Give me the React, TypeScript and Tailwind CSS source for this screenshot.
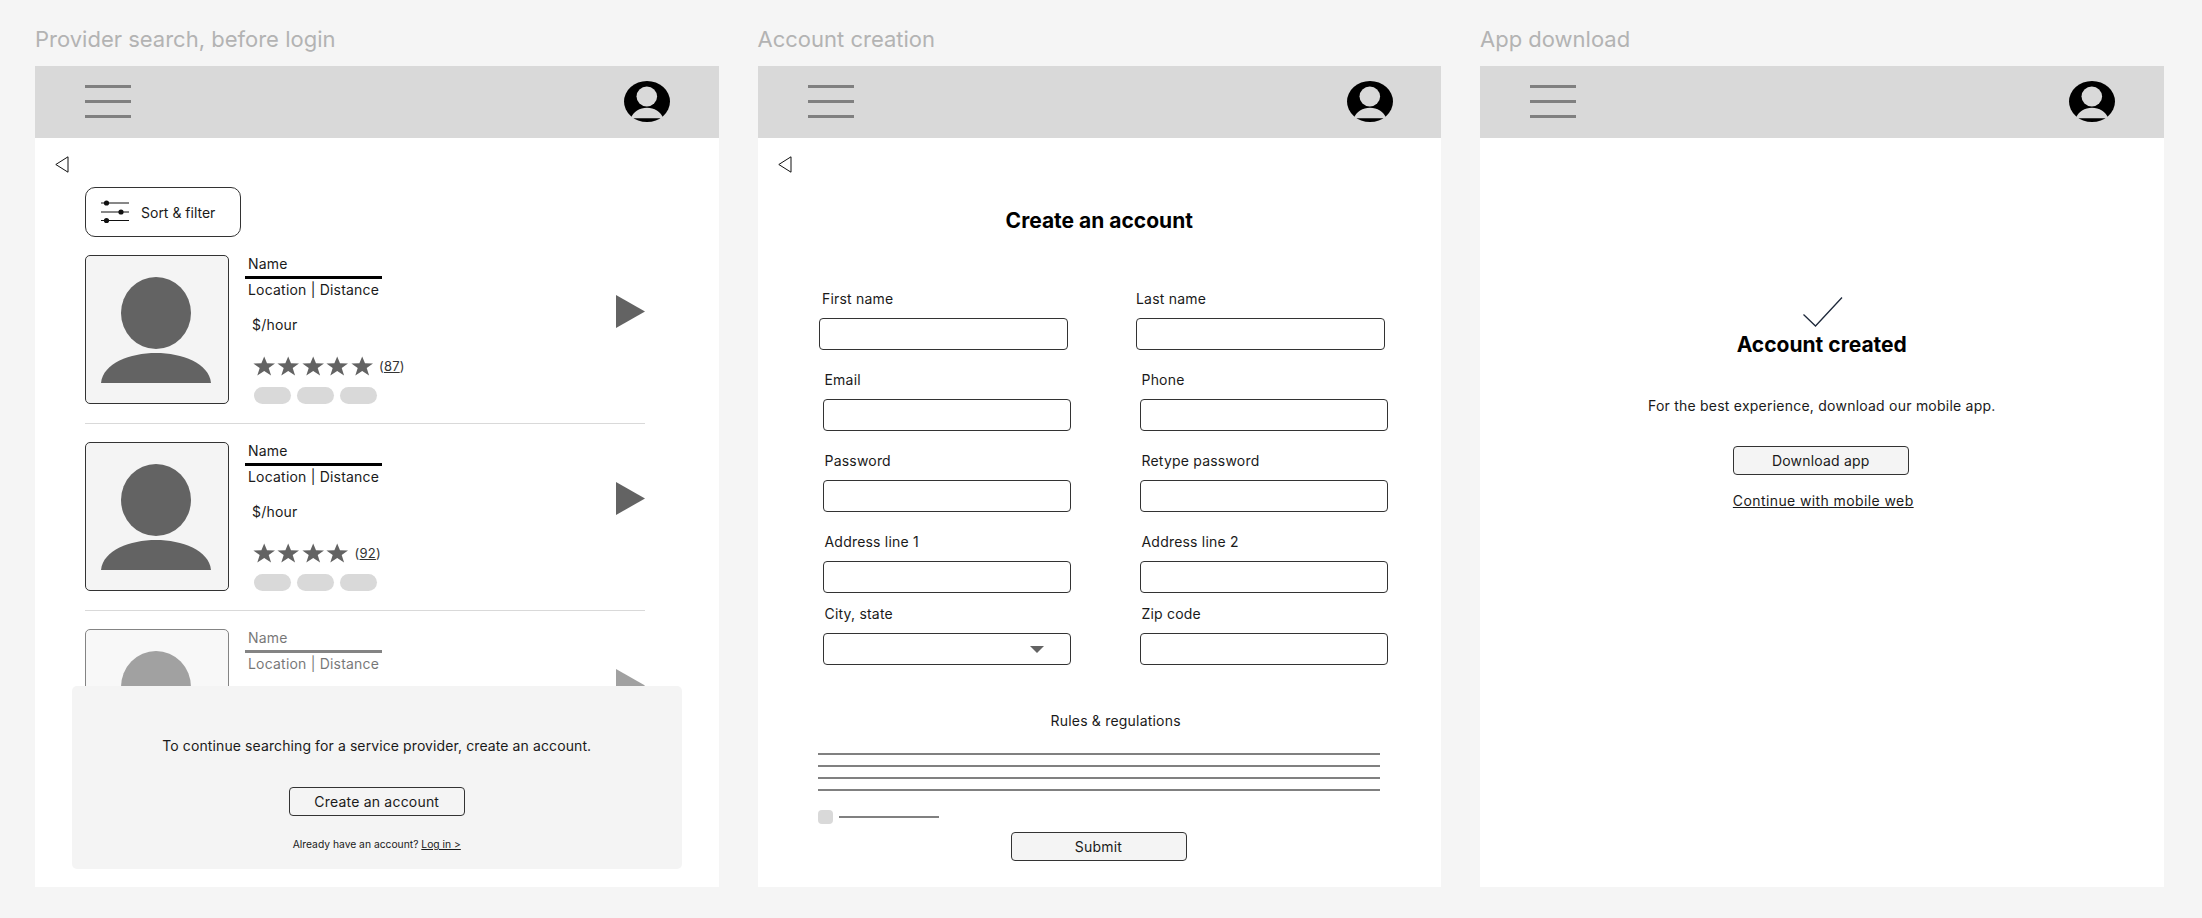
import React from "react";

const Avatar = () => (
  <svg width="46" height="41" viewBox="0 0 46 41" aria-hidden="true">
    <ellipse cx="23" cy="20.5" rx="23" ry="20.5" fill="#000" />
    <ellipse cx="22.8" cy="15.5" rx="10.3" ry="10" fill="#d9d9d9" />
    <path d="M7 37.2C9 30.5 16 26.8 23 26.8C30 26.8 37 30.5 39 37.2Z" fill="#d9d9d9" />
  </svg>
);

const Back = () => (
  <svg width="14" height="17" viewBox="0 0 14 17" className="ml-[20px] mt-[18.5px] block" aria-hidden="true">
    <path d="M13 .8V16.2L.8 8.5Z" fill="none" stroke="#111" strokeWidth="1" />
  </svg>
);

const Header = () => (
  <header className="flex h-[71.5px] items-center justify-between bg-[#d9d9d9] pl-[50px] pr-[48.5px]">
    <div className="flex flex-col gap-[12px]">
      <div className="h-[3px] w-[46px] bg-[#808080]" />
      <div className="h-[3px] w-[46px] bg-[#808080]" />
      <div className="h-[3px] w-[46px] bg-[#808080]" />
    </div>
    <Avatar />
  </header>
);

const Star = () => (
  <svg width="24.4" height="20" viewBox="0 0 24 20" aria-hidden="true">
    <polygon points="12,0.5 14.8,7.3 22.8,7.6 16.5,12.1 18.9,19.4 12,15 5.1,19.4 7.5,12.1 1.2,7.6 9.2,7.3" fill="#636363" />
  </svg>
);

const Card = ({ stars = 0, count = "", faded, divider }: { stars?: number; count?: string; faded?: boolean; divider?: boolean }) => (
  <div className={faded ? "opacity-60" : ""}>
    <div className="flex h-[149px]">
      <div className="h-[149px] w-[144px] shrink-0 rounded-[5px] border border-[#333] bg-[#f4f4f4]">
        <svg viewBox="0 0 142 147" className="block h-full w-full" aria-hidden="true">
          <ellipse cx="70" cy="57" rx="35" ry="36" fill="#636363" />
          <path d="M15 127C17 107 44 97 70 97C96 97 123 107 125 127Z" fill="#636363" />
        </svg>
      </div>
      <div className="ml-[16px] text-[14px] leading-[18px] tracking-[0.2px] text-[#1a1a1a]">
        <div className="ml-[3px]">Name</div>
        <div className={`mt-[3px] h-[3px] w-[137px] ${faded ? "bg-[#333]" : "bg-black"}`} />
        <div className="ml-[3px] mt-[2px]">Location | Distance</div>
        {!faded && (
          <>
            <div className="ml-[7px] mt-[17px]">$/hour</div>
            <div className="ml-[7px] mt-[22px] flex h-[20px] items-center">
              {Array.from({ length: stars }).map((_, i) => (
                <Star key={i} />
              ))}
              <span className="ml-[5px] text-[13px] text-[#333]">
                (<span className="underline">{count}</span>)
              </span>
            </div>
            <div className="ml-[9px] mt-[11px] flex gap-[6px]">
              <div className="h-[17px] w-[37px] rounded-full bg-[#d9d9d9]" />
              <div className="h-[17px] w-[37px] rounded-full bg-[#d9d9d9]" />
              <div className="h-[17px] w-[37px] rounded-full bg-[#d9d9d9]" />
            </div>
          </>
        )}
      </div>
      <svg width="29" height="33" viewBox="0 0 29 33" className="ml-auto mt-[40px] block" aria-hidden="true">
        <path d="M0 0L29 16.5L0 33Z" fill="#636363" />
      </svg>
    </div>
    {divider && <div className="mb-[18px] mt-[19px] h-px bg-[#d9d9d9]" />}
  </div>
);

const Button = ({ children }: { children: React.ReactNode }) => (
  <button className="h-[29px] w-[176px] rounded-[4px] border border-[#333] bg-[#f4f4f4] text-[14px] tracking-[0.2px] text-[#1a1a1a]">{children}</button>
);

const Field = ({ label, labelClass = "ml-[2px]", select }: { label: string; labelClass?: string; select?: boolean }) => (
  <label className="block w-[248.5px]">
    <span className={`block text-[14px] leading-[18px] tracking-[0.2px] text-[#1a1a1a] ${labelClass}`}>{label}</span>
    {select ? (
      <div className="mt-[10px] flex h-[32px] items-center justify-end rounded-[4px] border border-[#333] bg-white pr-[26px]">
        <svg width="14" height="7" viewBox="0 0 14 7" aria-hidden="true">
          <path d="M0 0H14L7 7Z" fill="#636363" />
        </svg>
      </div>
    ) : (
      <input className="mt-[10px] block h-[32px] w-full rounded-[4px] border border-[#333] bg-white" />
    )}
  </label>
);

const Title = ({ children }: { children: React.ReactNode }) => (
  <h2 className="mb-[15px] pt-[27px] text-[22px] leading-[24px] font-normal text-[#b3b3b3]">{children}</h2>
);

const TextLine = () => <div className="h-[2px] w-[562px] bg-[#808080]" />;

export default function App() {
  return (
    <div className="h-[918px] overflow-hidden bg-[#f5f5f5] pl-[35px] font-[Inter,sans-serif]">
      <div className="flex gap-[39px]">
        <section className="w-[683.5px]">
          <Title>Provider search, before login</Title>
          <div className="relative h-[821px] overflow-hidden bg-white">
            <Header />
            <Back />
            <div className="pl-[50px] pr-[74px]">
              <div className="mt-[14px] flex h-[50px] w-[156px] items-center rounded-[10px] border border-[#333] bg-white pl-[15px]">
                <svg width="28" height="26" viewBox="0 0 28 26" aria-hidden="true">
                  <g stroke="#111" strokeWidth="1">
                    <path d="M0 4H28M0 13H28M0 21.5H28" />
                  </g>
                  <circle cx="5.5" cy="4" r="2.6" fill="#111" />
                  <circle cx="20" cy="13" r="2.6" fill="#111" />
                  <circle cx="5.5" cy="21.5" r="2.6" fill="#111" />
                </svg>
                <span className="ml-[12px] text-[14px] text-[#1a1a1a]">Sort &amp; filter</span>
              </div>
              <div className="mt-[18px]">
                <Card stars={5} count="87" divider />
                <Card stars={4} count="92" divider />
                <Card faded />
              </div>
            </div>
            <div className="absolute bottom-[18px] left-[37px] right-[37px] flex h-[183px] flex-col items-center rounded-[5px] bg-[#f4f4f4] pt-[51px]">
              <p className="text-[14px] leading-[18px] tracking-[0.1px] text-[#1a1a1a]">To continue searching for a service provider, create an account.</p>
              <div className="mt-[32px]">
                <Button>Create an account</Button>
              </div>
              <p className="mt-[21px] text-[10.3px] leading-[14px] text-[#1a1a1a]">
                Already have an account? <span className="underline">Log in &gt;</span>
              </p>
            </div>
          </div>
        </section>

        <section className="w-[683.5px]">
          <Title>Account creation</Title>
          <div className="h-[821px] overflow-hidden bg-white">
            <Header />
            <Back />
            <h1 className="mt-[36px] text-center text-[21px] leading-[24px] font-bold text-black">Create an account</h1>
            <div className="mt-[57px] flex gap-[68.5px] pl-[61.5px]">
              <Field label="First name" labelClass="ml-[3px]" />
              <Field label="Last name" labelClass="ml-0" />
            </div>
            <div className="mt-[21px] flex gap-[68.5px] pl-[65px]">
              <Field label="Email" />
              <Field label="Phone" />
            </div>
            <div className="mt-[21px] flex gap-[68.5px] pl-[65px]">
              <Field label="Password" />
              <Field label="Retype password" />
            </div>
            <div className="mt-[21px] flex gap-[68.5px] pl-[65px]">
              <Field label="Address line 1" />
              <Field label="Address line 2" />
            </div>
            <div className="mt-[12px] flex gap-[68.5px] pl-[65px]">
              <Field label="City, state" select />
              <Field label="Zip code" />
            </div>
            <p className="ml-[293px] mt-[47px] text-[14px] leading-[18px] tracking-[0.2px] text-[#1a1a1a]">Rules &amp; regulations</p>
            <div className="ml-[60.5px] mt-[23px] flex flex-col gap-[10px]">
              <TextLine />
              <TextLine />
              <TextLine />
              <TextLine />
            </div>
            <div className="ml-[60.5px] mt-[19px] flex items-center gap-[6px]">
              <div className="h-[14px] w-[15px] rounded-[4px] bg-[#d9d9d9]" />
              <div className="h-[2px] w-[100px] bg-[#808080]" />
            </div>
            <div className="ml-[253px] mt-[8px]">
              <Button>Submit</Button>
            </div>
          </div>
        </section>

        <section className="w-[683.5px]">
          <Title>App download</Title>
          <div className="h-[821px] overflow-hidden bg-white">
            <Header />
            <div className="flex flex-col items-center">
              <svg width="40" height="30" viewBox="0 0 40 30" className="ml-[3px] mt-[159.5px] block" aria-hidden="true">
                <path d="M.5 17.5L12.5 29L39 .5" fill="none" stroke="#1e293b" strokeWidth="1.3" />
              </svg>
              <h1 className="mt-[6px] text-[21px] leading-[24px] font-bold text-black">Account created</h1>
              <p className="mt-[40px] text-[14px] leading-[18px] tracking-[0.23px] text-[#1a1a1a]">For the best experience, download our mobile app.</p>
              <div className="mr-[2px] mt-[31px]">
                <Button>Download app</Button>
              </div>
              <a className="ml-[3px] mt-[17px] text-[14px] leading-[18px] tracking-[0.4px] text-[#1a1a1a] underline">Continue with mobile web</a>
            </div>
          </div>
        </section>
      </div>
    </div>
  );
}
